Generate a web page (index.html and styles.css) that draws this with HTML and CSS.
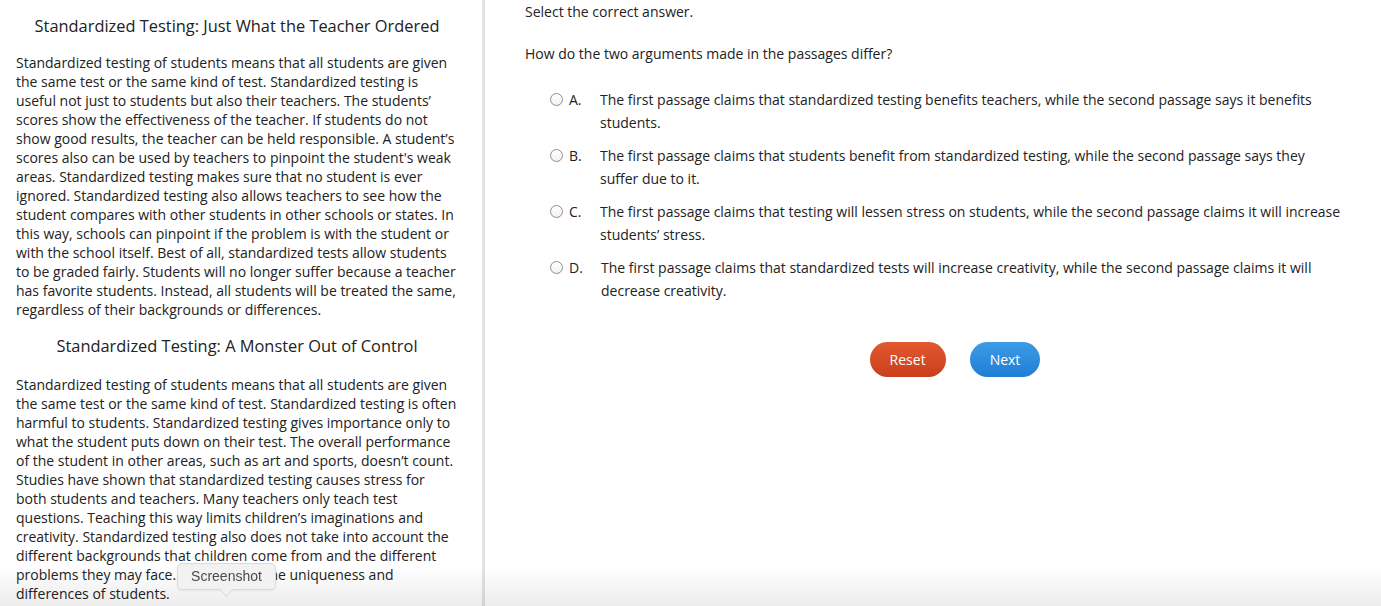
FILE: index.html
```html
<!DOCTYPE html>
<html lang="en">
<head>
<meta charset="utf-8">
<title>Standardized Testing</title>
<link rel="stylesheet" href="styles.css">
</head>
<body>
<div class="layout">
  <section class="passages">
    <h2 class="passage-title">Standardized Testing: Just What the Teacher Ordered</h2>
    <p class="passage-text">Standardized testing of students means that all students are given the same test or the same kind of test. Standardized testing is useful not just to students but also their teachers. The students’ scores show the effectiveness of the teacher. If students do not show good results, the teacher can be held responsible. A student’s scores also can be used by teachers to pinpoint the student's weak areas. Standardized testing makes sure that no student is ever ignored. Standardized testing also allows teachers to see how the student compares with other students in other schools or states. In this way, schools can pinpoint if the problem is with the student or with the school itself. Best of all, standardized tests allow students to be graded fairly. Students will no longer suffer because a teacher has favorite students. Instead, all students will be treated the same, regardless of their backgrounds or differences.</p>
    <h2 class="passage-title">Standardized Testing: A Monster Out of Control</h2>
    <p class="passage-text">Standardized testing of students means that all students are given the same test or the same kind of test. Standardized testing is often harmful to students. Standardized testing gives importance only to what the student puts down on their test. The overall performance of the student in other areas, such as art and sports, doesn’t count. Studies have shown that standardized testing causes stress for both students and teachers. Many teachers only teach test questions. Teaching this way limits children’s imaginations and creativity. Standardized testing also does not take into account the different backgrounds that children come from and the different problems they may face. It can ignore the uniqueness and differences of students.</p>
  </section>
  <section class="question">
    <p class="instruction">Select the correct answer.</p>
    <p class="prompt">How do the two arguments made in the passages differ?</p>
    <ul class="options">
      <li class="option"><span class="radio"></span><span class="letter">A.</span><span class="option-text">The first passage claims that standardized testing benefits teachers, while the second passage says it benefits students.</span></li>
      <li class="option"><span class="radio"></span><span class="letter">B.</span><span class="option-text">The first passage claims that students benefit from standardized testing, while the second passage says they suffer due to it.</span></li>
      <li class="option"><span class="radio"></span><span class="letter">C.</span><span class="option-text">The first passage claims that testing will lessen stress on students, while the second passage claims it will increase students’ stress.</span></li>
      <li class="option"><span class="radio"></span><span class="letter letter-wide">D.</span><span class="option-text">The first passage claims that standardized tests will increase creativity, while the second passage claims it will decrease creativity.</span></li>
    </ul>
    <div class="actions">
      <button class="btn btn-reset" type="button">Reset</button>
      <button class="btn btn-next" type="button">Next</button>
    </div>
  </section>
</div>
<div class="bottom-fade"></div>
<div class="tooltip">Screenshot</div>
</body>
</html>
```

FILE: styles.css
```css
html, body {
  margin: 0;
  padding: 0;
  height: 100%;
  overflow: hidden;
  background: #fff;
}

body {
  font-family: "Open Sans", "Liberation Sans", sans-serif;
  color: #222;
}

.layout {
  display: flex;
  height: 100vh;
}

.passages {
  width: 442px;
  flex: none;
  padding: 15px 24px 0 16px;
  border-right: 3px solid #e3e3e3;
  overflow: hidden;
}

.passage-title {
  margin: 0 0 16px;
  font-size: 16.4px;
  line-height: 22px;
  font-weight: 400;
  text-align: center;
  color: #222;
}

.passage-text {
  margin: 0 0 16px;
  font-size: 14px;
  line-height: 19px;
}

.passage-text + .passage-title {
  margin-bottom: 18px;
}

.question {
  flex: 1;
  padding: 2px 0 0 40px;
  font-size: 14px;
  line-height: 19px;
}

.instruction {
  margin: 0 0 23px;
}

.prompt {
  margin: 0 0 25px;
}

.options {
  list-style: none;
  margin: 0;
  padding: 0 36px 0 25px;
  display: flex;
  flex-direction: column;
  gap: 10px;
}

.option {
  display: flex;
  align-items: flex-start;
  line-height: 23px;
}

.radio {
  flex: none;
  width: 11px;
  height: 11px;
  margin-top: 5px;
  border: 1px solid #8f8f8f;
  border-radius: 50%;
  background: linear-gradient(#ffffff, #f1f1f1);
}

.letter {
  flex: none;
  width: 31px;
  margin-left: 6px;
  font-size: 14px;
}

.letter-wide {
  width: 32px;
}

.option-text {
  flex: 1;
}

.actions {
  display: flex;
  justify-content: center;
  gap: 24px;
  margin-top: 40px;
  padding-left: 4px;
}

.btn {
  height: 35px;
  padding: 0 20px;
  border: none;
  border-radius: 18px;
  font-family: "Open Sans", "Liberation Sans", sans-serif;
  font-size: 14px;
  color: #fff;
  cursor: pointer;
}

.btn-reset {
  background: linear-gradient(#e2582f, #c93f1c);
}

.btn-next {
  background: linear-gradient(#3c9ce6, #1f7dd5);
}

.bottom-fade {
  position: fixed;
  left: 0;
  right: 0;
  bottom: 0;
  height: 40px;
  background: linear-gradient(rgba(0, 0, 0, 0), rgba(0, 0, 0, 0.075));
  pointer-events: none;
}

.tooltip {
  position: fixed;
  left: 177px;
  top: 563px;
  width: 99px;
  height: 27px;
  box-sizing: border-box;
  border: 1px solid #dadada;
  border-radius: 5px;
  background: #f2f2f2;
  font-family: "Liberation Sans", Arial, sans-serif;
  font-size: 14px;
  line-height: 25px;
  text-align: center;
  color: #4a4a4a;
  box-shadow: 0 1px 2px rgba(0, 0, 0, 0.06);
}

.tooltip::after {
  content: "";
  position: absolute;
  left: 44px;
  top: 26px;
  width: 8px;
  height: 8px;
  background: #f2f2f2;
  border-right: 1px solid #dadada;
  border-bottom: 1px solid #dadada;
  transform: translateY(-4px) rotate(45deg);
}
```
